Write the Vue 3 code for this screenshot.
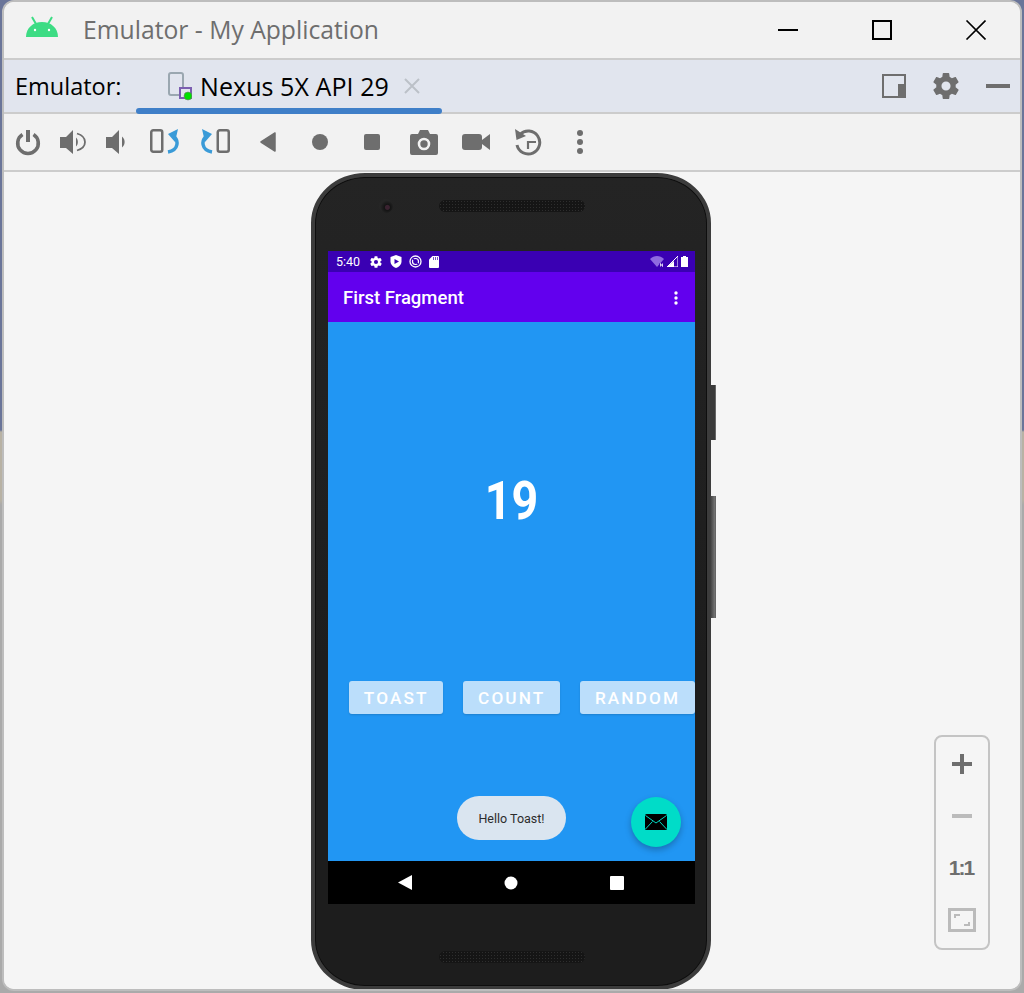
<script setup>
// emulator window, the phone inside it is a static mock
const buttons = ['TOAST', 'COUNT', 'RANDOM']
</script>

<template>
  <div class="window">
    <header class="titlebar">
      <svg class="logo" width="32" height="22" viewBox="0 0 32 22">
        <path d="M0 21C0 12 7 6 16 6s16 6 16 15z" fill="#3ddc84" />
        <path d="M6 1l4 7M26 1l-4 7" stroke="#3ddc84" stroke-width="2" />
        <circle cx="9" cy="14" r="1.2" fill="#fff" />
        <circle cx="23" cy="14" r="1.2" fill="#fff" />
      </svg>
      <span class="title">Emulator - My Application</span>
      <svg class="winctl" width="208" height="20" viewBox="0 0 208 20">
        <path d="M0 10h20" stroke="#000" stroke-width="2" />
        <rect x="95" y="1" width="18" height="18" fill="none" stroke="#000" stroke-width="2" />
        <path d="M188.500 .5l19 19M207.500 .5l-19 19" stroke="#000" stroke-width="1.600" />
      </svg>
    </header>

    <div class="tabbar">
      <span class="tool-label">Emulator:</span>
      <div class="tab">
        <svg width="24" height="30" viewBox="0 0 24 30">
          <rect x="1" y="2" width="14" height="22" rx="2" fill="none" stroke="#9aa7b0" stroke-width="2" />
          <rect x="12" y="17" width="11" height="10" fill="#e1e5ee" stroke="#7b5fb0" stroke-width="2" />
          <circle cx="20" cy="25" r="4" fill="#00e000" stroke="#777" stroke-width=".6" />
        </svg>
        <span class="tab-name">Nexus 5X API 29</span>
        <svg class="tab-x" width="16" height="16" viewBox="0 0 16 16">
          <path d="M1 1l14 14M15 1L1 15" stroke="#bcc1c8" stroke-width="2" />
        </svg>
        <i class="tab-line"></i>
      </div>
      <div class="tab-right">
        <svg width="24" height="24" viewBox="0 0 24 24">
          <rect x="1" y="1" width="22" height="22" fill="none" stroke="#6e6e6e" stroke-width="2" />
          <rect x="16" y="10" width="8" height="14" fill="#6e6e6e" />
        </svg>
        <svg class="gear" width="26" height="26" viewBox="2 2 20 20">
          <path fill="#6e6e6e" d="M19.400 13c.04-.32.060-.66.060-1s-.02-.68-.07-1l2.100-1.650c.19-.15.24-.42.120-.64l-2-3.460c-.12-.22-.38-.3-.6-.22l-2.490 1c-.52-.4-1.080-.73-1.690-.98l-.38-2.650A.5.500 0 0 0 14 2h-4a.5.500 0 0 0-.49.420l-.38 2.650c-.61.25-1.170.59-1.690.98l-2.490-1c-.23-.09-.49 0-.6.220l-2 3.460c-.13.220-.07.490.12.640L4.570 11c-.04.320-.07.660-.07 1s.02.680.07 1l-2.110 1.650c-.19.150-.24.420-.12.640l2 3.460c.12.220.38.300.6.220l2.490-1c.52.400 1.080.730 1.690.980l.38 2.650c.030.240.240.420.49.420h4c.25 0 .460-.18.490-.42l.38-2.650c.610-.25 1.170-.59 1.690-.98l2.490 1c.23.090.49 0 .6-.22l2-3.460c.12-.22.070-.49-.12-.64zM12 15.500a3.500 3.500 0 1 1 0-7 3.500 3.500 0 0 1 0 7z" />
        </svg>
        <i class="dash"></i>
      </div>
    </div>

    <div class="toolbar">
      <button class="tb w44">
        <svg width="28" height="28" viewBox="0 0 28 28">
          <path d="M8.500 6.500a10.300 10.300 0 1 0 11 0" fill="none" stroke="#6e6e6e" stroke-width="3.600" />
          <path d="M14 2v12" stroke="#6e6e6e" stroke-width="4" />
        </svg>
      </button>
      <button class="tb w44">
        <svg width="28" height="28" viewBox="0 0 28 28">
          <path d="M2 9h6l7-7v24l-7-6H2z" fill="#6e6e6e" />
          <path d="M18 9.500c2.500 2.500 2.500 6.500 0 9z" fill="#6e6e6e" />
          <path d="M19 5.500c5 1.500 8 5 8 8.500s-3 7-8 8.500" fill="none" stroke="#6e6e6e" stroke-width="1.800" />
        </svg>
      </button>
      <button class="tb w44">
        <svg width="28" height="28" viewBox="0 0 28 28">
          <path d="M4 9h6l7-7v24l-7-6H4z" fill="#6e6e6e" />
          <path d="M20 8.500c3.500 3 3.500 8 0 11z" fill="#6e6e6e" />
        </svg>
      </button>
      <button class="tb">
        <svg width="30" height="28" viewBox="0 0 30 28">
          <rect x="2.250" y="2.250" width="11" height="21.500" rx="2" fill="none" stroke="#6e6e6e" stroke-width="2.500" />
          <path d="M24 8C30 12 30 22 19 24" fill="none" stroke="#3a9bd8" stroke-width="3.500" />
          <path d="M19 6l10-5-3 13z" fill="#3a9bd8" />
        </svg>
      </button>
      <button class="tb">
        <svg width="30" height="28" viewBox="0 0 30 28">
          <rect x="16.750" y="2.250" width="11" height="21.500" rx="2" fill="none" stroke="#6e6e6e" stroke-width="2.500" />
          <path d="M6 8C0 12 0 22 11 24" fill="none" stroke="#3a9bd8" stroke-width="3.500" />
          <path d="M11 6L1 1l3 13z" fill="#3a9bd8" />
        </svg>
      </button>
      <button class="tb">
        <svg width="18" height="22" viewBox="0 0 18 22">
          <path d="M16 2v18L2 11z" fill="#6e6e6e" stroke="#6e6e6e" stroke-width="1.500" stroke-linejoin="round" />
        </svg>
      </button>
      <button class="tb">
        <svg width="18" height="18" viewBox="0 0 18 18"><circle cx="9" cy="9" r="8" fill="#6e6e6e" /></svg>
      </button>
      <button class="tb">
        <svg width="18" height="18" viewBox="0 0 18 18"><rect x="1" y="1" width="16" height="16" rx="2" fill="#6e6e6e" /></svg>
      </button>
      <button class="tb">
        <svg width="28" height="25" viewBox="0 0 28 25">
          <path d="M2 4h6l2-4h8l2 4h6a2 2 0 0 1 2 2v17a2 2 0 0 1-2 2H2a2 2 0 0 1-2-2V6a2 2 0 0 1 2-2z" fill="#6e6e6e" />
          <circle cx="14" cy="14" r="5" fill="none" stroke="#f2f2f2" stroke-width="2.600" />
        </svg>
      </button>
      <button class="tb">
        <svg width="28" height="18" viewBox="0 0 28 18">
          <rect x="0" y="1" width="20" height="16" rx="3" fill="#6e6e6e" />
          <path d="M20 7l8-6v16l-8-6z" fill="#6e6e6e" />
        </svg>
      </button>
      <button class="tb">
        <svg width="28" height="28" viewBox="0 0 28 28">
          <path d="M6 6.500A11.500 11.500 0 1 1 3 17" fill="none" stroke="#6e6e6e" stroke-width="3" />
          <path d="M1 1l1.500 11L12 8z" fill="#6e6e6e" />
          <path d="M22 14h-8v7" fill="none" stroke="#6e6e6e" stroke-width="2.200" />
        </svg>
      </button>
      <button class="tb">
        <svg width="8" height="24" viewBox="0 0 8 24" fill="#6e6e6e">
          <circle cx="4" cy="3" r="3" /><circle cx="4" cy="12" r="3" /><circle cx="4" cy="21" r="3" />
        </svg>
      </button>
    </div>

    <main class="stage">
      <div class="phone">
        <i class="side side-a"></i>
        <i class="side side-b"></i>
        <i class="lens"></i>
        <i class="speaker speaker-top"></i>

        <div class="screen">
          <div class="statusbar">
            <span class="clock">5:40</span>
            <svg class="st" width="14" height="14" viewBox="0 0 24 24">
              <path fill="#fff" d="M19.400 13c.04-.32.060-.66.060-1s-.02-.68-.07-1l2.100-1.650c.19-.15.24-.42.120-.64l-2-3.460c-.12-.22-.38-.3-.6-.22l-2.490 1c-.52-.4-1.080-.73-1.690-.98l-.38-2.650A.5.500 0 0 0 14 2h-4a.5.500 0 0 0-.49.420l-.38 2.650c-.61.25-1.170.59-1.690.98l-2.490-1c-.23-.09-.49 0-.6.220l-2 3.460c-.13.220-.07.490.12.640L4.570 11c-.04.320-.07.660-.07 1s.02.680.07 1l-2.110 1.650c-.19.150-.24.420-.12.640l2 3.460c.12.220.38.300.6.220l2.490-1c.52.400 1.080.730 1.690.980l.38 2.650c.030.240.240.420.49.420h4c.25 0 .460-.18.490-.42l.38-2.650c.610-.25 1.170-.59 1.690-.98l2.490 1c.23.090.49 0 .6-.22l2-3.460c.12-.22.070-.49-.12-.64zM12 15.500a3.500 3.500 0 1 1 0-7 3.500 3.500 0 0 1 0 7z" />
            </svg>
            <svg class="st" width="12" height="13" viewBox="0 0 12 13">
              <path d="M6 0l5.500 2v4.500C11.500 9.500 9 12 6 13 3 12 .5 9.500.5 6.500V2z" fill="#fff" />
              <path d="M4.500 4v5L9 6.500z" fill="#3a00b3" />
            </svg>
            <svg class="st" width="13" height="13" viewBox="0 0 13 13">
              <circle cx="6.500" cy="6.500" r="5.500" fill="none" stroke="#fff" stroke-width="1.300" />
              <circle cx="6.500" cy="6.500" r="3" fill="none" stroke="#fff" stroke-width="1.200" />
              <path d="M3 3l7 7" stroke="#3a00b3" stroke-width="1.300" />
            </svg>
            <svg class="st" width="10" height="12" viewBox="0 0 10 12">
              <path d="M3.500 0H9a1 1 0 0 1 1 1v10a1 1 0 0 1-1 1H1a1 1 0 0 1-1-1V3.500z" fill="#fff" />
              <path d="M4.500 1v3M6.500 1v3M8.500 1v3" stroke="#3a00b3" stroke-width=".7" />
            </svg>
            <div class="st-right">
              <svg width="14" height="11" viewBox="0 0 14 11">
                <path d="M0 3c4-4 10-4 14 0L7 11z" fill="#8f6ae0" />
                <path d="M9.500 7h4v4h-4z" fill="#3a00b3" />
                <path d="M10.500 10.500v-3l2 3v-3" stroke="#fff" stroke-width=".8" fill="none" />
              </svg>
              <svg width="11" height="11" viewBox="0 0 11 11">
                <path d="M11 0v11H0z" fill="none" stroke="#fff" stroke-width="1" />
                <path d="M7 5v6H0z" fill="#fff" />
              </svg>
              <svg width="7" height="11" viewBox="0 0 7 11">
                <path d="M2 0h3v1h2v10H0V1h2z" fill="#fff" />
              </svg>
            </div>
          </div>

          <div class="appbar">
            <span class="app-title">First Fragment</span>
            <svg width="4" height="14" viewBox="0 0 4 14" fill="#fff">
              <circle cx="2" cy="2" r="1.700" /><circle cx="2" cy="7" r="1.700" /><circle cx="2" cy="12" r="1.700" />
            </svg>
          </div>

          <div class="content">
            <div class="count">19</div>
            <div class="btn-row">
              <button v-for="b in buttons" :key="b" class="btn">{{ b }}</button>
            </div>
            <div class="toast">Hello Toast!</div>
            <div class="fab">
              <svg width="22" height="16" viewBox="0 0 22 16">
                <rect width="22" height="16" rx="1.500" fill="#000" />
                <path d="M.5 1.500L11 9l10.500-7.500M.5 15l7-7.500M21.500 15l-7-7.500" fill="none" stroke="#03dac5" stroke-width="1" />
              </svg>
            </div>
          </div>

          <div class="navbar">
            <svg width="14" height="15" viewBox="0 0 14 15"><path d="M14 0v15L0 7.500z" fill="#fff" /></svg>
            <svg width="14" height="14" viewBox="0 0 14 14"><circle cx="7" cy="7" r="6.500" fill="#fff" /></svg>
            <svg width="14" height="14" viewBox="0 0 14 14"><rect width="14" height="14" rx="1" fill="#fff" /></svg>
          </div>
        </div>

        <i class="speaker speaker-bottom"></i>
      </div>

      <aside class="zoom">
        <svg width="20" height="20" viewBox="0 0 20 20"><path d="M0 10h20M10 0v20" stroke="#6e6e6e" stroke-width="4" /></svg>
        <svg width="20" height="20" viewBox="0 0 20 20"><path d="M0 10h20" stroke="#bbb" stroke-width="4" /></svg>
        <span class="one">1:1</span>
        <svg width="28" height="24" viewBox="0 0 28 24">
          <rect x="1.500" y="1.500" width="25" height="21" fill="none" stroke="#bbb" stroke-width="3" />
          <path d="M7 10V7h5M21 14v3h-5" fill="none" stroke="#bbb" stroke-width="2" />
        </svg>
      </aside>
    </main>
  </div>
</template>

<style>
html, body {
  margin: 0;
  height: 993px;
  overflow: hidden;
  background: linear-gradient(#6a7599 0, #6a7599 430px, #b8b2a4 432px, #b8b2a4 500px, #aaa 505px, #aaa 100%);
}
</style>

<style scoped>
.window {
  width: 1020px;
  height: 991px;
  margin: 0 2px;
  box-sizing: border-box;
  border: 2px solid #bdbdbd;
  border-radius: 12px;
  background: #f5f5f5;
  overflow: hidden;
  display: flex;
  flex-direction: column;
  font-family: "Open Sans", "Noto Sans", sans-serif;
}
.titlebar {
  height: 56px;
  flex: none;
  display: flex;
  align-items: center;
  background: #f2f2f2;
  padding-left: 22px;
}
.logo { margin-top: -6px; }
.title {
  margin-left: 25px;
  margin-top: -2px;
  font-size: 24.700px;
  color: #6e6e6e;
}
.winctl { margin-left: auto; margin-right: 34px; }

.tabbar {
  height: 52px;
  flex: none;
  display: flex;
  align-items: center;
  background: #e1e5ee;
  border-top: 2px solid #ccc;
  border-bottom: 2px solid #ccc;
  padding-left: 11px;
}
.tool-label { font-size: 23.500px; color: #000; width: 121px; }
.tab {
  position: relative;
  width: 306px;
  height: 52px;
  box-sizing: border-box;
  padding-left: 32px;
  display: flex;
  align-items: center;
}
.tab-name { margin-left: 8px; font-size: 25px; color: #000; white-space: nowrap; letter-spacing: .07px; }
.tab-x { margin-left: 15px; }
.tab-line {
  position: absolute;
  left: 0;
  right: 0;
  bottom: -2px;
  height: 6px;
  border-radius: 3px;
  background: #3f7fc8;
}
.tab-right {
  margin-left: auto;
  margin-right: 10px;
  display: flex;
  align-items: center;
}
.gear { margin-left: 27px; }
.dash { display: block; width: 24px; height: 4px; background: #6e6e6e; margin-left: 27px; }

.toolbar {
  height: 56px;
  flex: none;
  display: flex;
  align-items: center;
  background: #f2f2f2;
  border-bottom: 2px solid #ccc;
  padding-left: 2px;
}
.tb {
  width: 52px;
  height: 56px;
  padding: 0;
  border: 0;
  background: none;
  display: flex;
  align-items: center;
  justify-content: center;
}
.w44 { width: 44px; }

.stage {
  position: relative;
  flex: 1;
  min-height: 0;
  background: #f5f5f5;
}
.phone {
  position: relative;
  width: 400px;
  height: 817px;
  margin: 1px 0 0 307px;
  box-sizing: border-box;
  padding: 74px 12px 82px 13px;
  border: 4px solid #3c3c3c;
  border-radius: 54px / 50px;
  background: linear-gradient(#242424, #1d1d1d 60%);
  box-shadow: 0 0 0 1px #0e0e0e inset;
}
.side {
  position: absolute;
  right: -9px;
  width: 5px;
  background: #3a3a3a;
  border-right: 1px solid #666;
}
.side-a { top: 208px; height: 55px; }
.side-b { top: 319px; height: 122px; background: linear-gradient(90deg, #3a3a3a, #777); }
.lens {
  position: absolute;
  left: 64px;
  top: 22px;
  width: 14px;
  height: 14px;
  border-radius: 50%;
  background: radial-gradient(circle at 60% 60%, #3a2230 0 2px, #141414 3px, #262626 7px);
}
.speaker {
  position: absolute;
  left: 124px;
  width: 146px;
  height: 12px;
  border-radius: 6px;
  background-color: #151515;
  background-image: radial-gradient(#2e2e2e .7px, transparent 1px);
  background-size: 3px 3px;
}
.speaker-top { top: 23px; }
.speaker-bottom { bottom: 23px; }

.screen {
  height: 653px;
  display: flex;
  flex-direction: column;
  font-family: Roboto, sans-serif;
}
.statusbar {
  height: 21px;
  flex: none;
  display: flex;
  align-items: center;
  background: #3a00b3;
  padding: 0 7px 0 8px;
  color: #fff;
}
.clock { font-size: 12.500px; width: 33px; }
.st { margin-right: 7px; }
.st-right { margin-left: auto; display: flex; align-items: center; gap: 3px; }

.appbar {
  height: 50px;
  flex: none;
  box-sizing: border-box;
  padding: 2px 17px 0 15px;
  display: flex;
  align-items: center;
  justify-content: space-between;
  background: #6200ee;
  color: #fff;
}
.app-title { font-size: 18.500px; font-weight: 500; }

.content {
  position: relative;
  flex: 1;
  background: #2196f3;
  padding-top: 139px;
}
.count {
  height: 80px;
  line-height: 80px;
  text-align: center;
  font-size: 53px;
  font-weight: 700;
  color: #fff;
  transform: scaleX(.88);
}
.btn-row {
  display: flex;
  gap: 20px;
  margin-top: 140px;
  padding-left: 21px;
}
.btn {
  height: 33px;
  padding: 0 14.800px;
  border: 0;
  border-radius: 3px;
  background: #bbdefb;
  color: #fff;
  font-family: Roboto, sans-serif;
  font-size: 17.200px;
  font-weight: 500;
  letter-spacing: 2.100px;
  box-shadow: 0 1px 2px rgba(0, 0, 0, .15);
}
.toast {
  position: absolute;
  left: 129px;
  top: 474px;
  width: 109px;
  height: 44px;
  line-height: 46px;
  text-align: center;
  border-radius: 22px;
  background: #dae5f0;
  color: #2c2c2c;
  font-size: 12.500px;
}
.fab {
  position: absolute;
  left: 303px;
  top: 475px;
  width: 50px;
  height: 50px;
  border-radius: 50%;
  background: #00dcc8;
  box-shadow: 0 3px 6px rgba(0, 0, 0, .25);
  display: flex;
  align-items: center;
  justify-content: center;
}
.navbar {
  height: 43px;
  flex: none;
  background: #000;
  box-sizing: border-box;
  padding: 0 71px 0 70px;
  display: flex;
  align-items: center;
  justify-content: space-between;
}

.zoom {
  position: absolute;
  left: 930px;
  top: 563px;
  width: 56px;
  height: 215px;
  box-sizing: border-box;
  border: 2px solid #c4c4c4;
  border-radius: 8px;
  display: grid;
  grid-auto-rows: 52px;
  justify-items: center;
  align-items: center;
  padding-top: 1px;
}
.one {
  font-family: "Liberation Sans", sans-serif;
  font-weight: 700;
  font-size: 21px;
  color: #6e6e6e;
  letter-spacing: -2px;
  margin-left: -2px;
}
</style>
